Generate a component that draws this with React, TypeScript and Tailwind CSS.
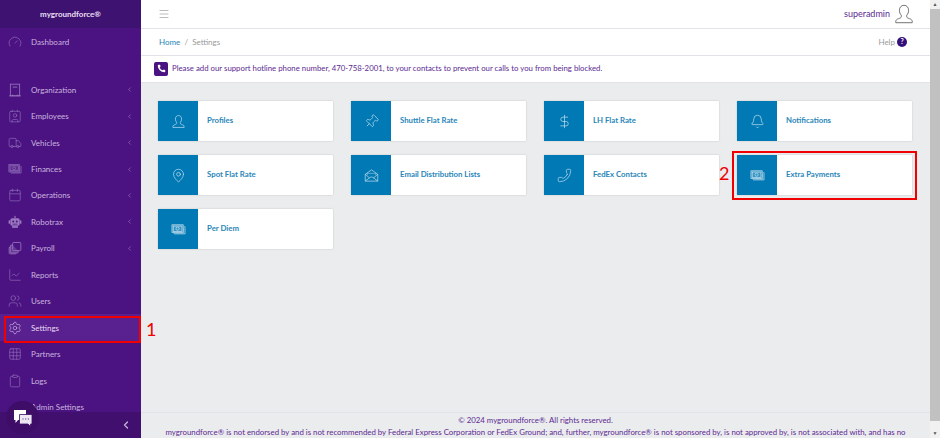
import React from "react";
import {
  Gauge, Contact, Truck, Calendar, ChartLine, Users, Settings, Grid3x3, Clipboard,
  ChevronLeft, Menu, DollarSign, Bell, MapPin, Phone, Pin,
} from "lucide-react";

type IP = { size?: number; strokeWidth?: number; className?: string };

const Bust = ({ size = 16, strokeWidth = 1, className }: IP) => (
  <svg width={size} height={size} viewBox="0 0 24 24" fill="none" stroke="currentColor" strokeWidth={strokeWidth} strokeLinejoin="round" className={className}>
    <path d="M12 2.500c-3 0-5 2.300-5 5.600 0 2.200.9 4 2 5.200v1.700c0 1-1 1.400-3 2.100-2 .7-3 1.600-3 3.200v1.200h18v-1.200c0-1.600-1-2.500-3-3.200-2-.7-3-1.100-3-2.100v-1.700c1.100-1.200 2-3 2-5.200 0-3.300-2-5.600-5-5.600z" />
  </svg>
);

const Money = ({ size = 16, strokeWidth = 1, className }: IP) => (
  <svg width={size} height={size} viewBox="0 0 24 24" fill="none" stroke="currentColor" strokeWidth={strokeWidth} className={className}>
    <rect x="1.500" y="4.500" width="18" height="12.500" fill="currentColor" fillOpacity="0.25" />
    <rect x="3.500" y="6.500" width="14" height="8.500" />
    <circle cx="10.500" cy="10.700" r="2.500" />
    <path d="M21 7.500h1.500V19H5v-1.500" />
    <path d="M20.500 9.500v8.500H7" opacity="0.6" />
  </svg>
);

const Mail = ({ size = 16, strokeWidth = 1, className }: IP) => (
  <svg width={size} height={size} viewBox="0 0 24 24" fill="none" stroke="currentColor" strokeWidth={strokeWidth} strokeLinejoin="round" className={className}>
    <path d="M2 10 12 3l10 7v11H2z" />
    <path d="M2 10l7 6M22 10l-7 6M2 21l7-5.500c2-1.500 4-1.500 6 0L22 21" />
    <path d="M5.500 8.500h13M5.500 8.500v2.500M18.500 8.500v2.500" opacity="0.7" />
  </svg>
);

const Handset = ({ size = 16, strokeWidth = 1, className }: IP) => (
  <Phone size={size} strokeWidth={strokeWidth} className={`-rotate-90 ${className ?? ""}`} />
);

const TiltPin = ({ size = 16, strokeWidth = 1, className }: IP) => (
  <Pin size={size} strokeWidth={strokeWidth} className={`rotate-45 ${className ?? ""}`} />
);

const Book = ({ size = 14, strokeWidth = 1, className }: IP) => (
  <svg width={size} height={size} viewBox="0 0 24 24" fill="none" stroke="currentColor" strokeWidth={strokeWidth * 1.4} className={className}>
    <rect x="4" y="2" width="16" height="20" />
    <path d="M2 22h20M8 7h8M8 22v-2M16 22v-2" />
  </svg>
);

const Robot = ({ size = 14, className }: IP) => (
  <svg width={size} height={size} viewBox="0 0 24 24" className={className}>
    <rect x="11" y="1.500" width="2" height="4" fill="currentColor" />
    <rect x="4" y="5.500" width="16" height="13" rx="3" fill="currentColor" />
    <rect x="1" y="9" width="2.500" height="6" rx="1" fill="currentColor" />
    <rect x="20.500" y="9" width="2.500" height="6" rx="1" fill="currentColor" />
    <circle cx="9" cy="11" r="1.700" fill="#4b1382" />
    <circle cx="15" cy="11" r="1.700" fill="#4b1382" />
    <rect x="8" y="15" width="8" height="1.300" fill="#4b1382" />
    <rect x="7" y="19" width="10" height="3" fill="currentColor" />
  </svg>
);

const Stack = ({ size = 14, strokeWidth = 1, className }: IP) => (
  <svg width={size} height={size} viewBox="0 0 24 24" fill="none" stroke="currentColor" strokeWidth={strokeWidth * 1.4} className={className}>
    <rect x="8" y="2.500" width="14" height="14" rx="1.500" />
    <path d="M8 7H5.500A1.500 1.500 0 0 0 4 8.500v10.500a1.500 1.500 0 0 0 1.500 1.500H16a1.500 1.500 0 0 0 1.500-1.500V16.500" fill="currentColor" fillOpacity="0.35" />
    <path d="M4 11H2v9.500A1.500 1.500 0 0 0 3.500 22H14" />
  </svg>
);

const nav: [string, any, boolean][] = [
  ["Organization", Book, true],
  ["Employees", Contact, true],
  ["Vehicles", Truck, true],
  ["Finances", Money, true],
  ["Operations", Calendar, true],
  ["Robotrax", Robot, true],
  ["Payroll", Stack, true],
  ["Reports", ChartLine, false],
  ["Users", Users, false],
  ["Settings", Settings, false],
  ["Partners", Grid3x3, false],
  ["Logs", Clipboard, false],
  ["Admin Settings", Settings, false],
];

const cards: [string, any][] = [
  ["Profiles", Bust],
  ["Shuttle Flat Rate", TiltPin],
  ["LH Flat Rate", DollarSign],
  ["Notifications", Bell],
  ["Spot Flat Rate", MapPin],
  ["Email Distribution Lists", Mail],
  ["FedEx Contacts", Handset],
  ["Extra Payments", Money],
  ["Per Diem", Money],
];

function NavItem({ label, Icon, arrow }: { label: string; Icon: any; arrow: boolean }) {
  const active = label === "Settings";
  const admin = label === "Admin Settings";
  return (
    <div className={`h-[26.45px] shrink-0 flex items-center pl-[8px] pr-[8px] ${active ? "bg-[#59208f] text-[#e6d8f2]" : "text-[#c9b4df]"}`}>
      <div className="w-[23px]">{!admin && <Icon size={14} strokeWidth={1} className={active ? "text-[#d9c8ea]" : "text-[#9a78bf]"} />}</div>
      <span className="flex-1 text-[8px]">{label}</span>
      {arrow && <ChevronLeft size={7} strokeWidth={1.5} className="text-[#b9a0d4]" />}
    </div>
  );
}

function Card({ label, Icon }: { label: string; Icon: any }) {
  return (
    <div className="w-[175px] h-[40px] flex bg-white rounded-[1px] shadow-[0_0_2px_rgba(0,0,0,0.18)]">
      <div className="w-[40px] bg-[#0079b5] flex items-center justify-center">
        <Icon size={15} strokeWidth={1} className="text-[#d8eaf4]" />
      </div>
      <div className="flex-1 flex items-center pl-[9px] text-[7.8px] font-bold text-[#2a86b8]">{label}</div>
    </div>
  );
}

export default function App() {
  return (
    <div className="relative w-[940px] h-[438px] overflow-hidden flex bg-[#ebecee] font-['Lato',sans-serif]">
      <aside className="w-[141px] h-full flex flex-col bg-[#4b1382] relative shrink-0">
        <div className="h-[28px] bg-[#3e1270] flex items-center justify-center text-[8px] font-bold text-[#eadff4]">mygroundforce®</div>
        <div className="h-[28px] flex items-center pl-[8px] text-[#c9b4df] text-[8px]">
          <div className="w-[23px]"><Gauge size={14} strokeWidth={1} className="text-[#9a78bf]" /></div>Dashboard
        </div>
        <div className="h-[20.5px]" />
        <div className="flex flex-col">
          {nav.map(([l, I, a]) => <NavItem key={l} label={l} Icon={I} arrow={a} />)}
        </div>
        <div className="absolute left-0 right-0 bottom-0 h-[26px] bg-[#41106f] flex items-center justify-end pr-[9px]">
          <ChevronLeft size={12} strokeWidth={2.5} className="text-[#c8b6da]" />
        </div>
        <div className="absolute left-[6px] top-[401px] w-[33px] h-[33px] rounded-full bg-[#3d0d68] flex items-center justify-center">
          <svg width="20" height="20" viewBox="0 0 20 20">
            <path d="M1 2h12v10H5l-2.500 3v-3H1z" fill="white" />
            <path d="M6.500 6.500H19v9.500h-1.500v2.500L15 16H6.500z" fill="#ece6f2" stroke="#3d0d68" strokeWidth="0.8" />
            <circle cx="10" cy="11" r="0.700" fill="#7a5a9a" /><circle cx="12.700" cy="11" r="0.700" fill="#7a5a9a" /><circle cx="15.400" cy="11" r="0.700" fill="#7a5a9a" />
          </svg>
        </div>
      </aside>
      <main className="flex-1 flex flex-col min-w-0">
        <header className="h-[28.5px] bg-white border-b border-[#e2e3e8] flex items-center pl-[17px] pr-[25px] justify-between shrink-0">
          <Menu size={12} strokeWidth={1} className="text-[#777]" />
          <div className="flex items-center gap-[3px]">
            <span className="text-[9px] text-[#5c2a92]">superadmin</span>
            <Bust size={22} strokeWidth={1} className="text-[#666]" />
          </div>
        </header>
        <div className="h-[27px] bg-white border-b border-[#e2e3e8] flex items-center pl-[18px] pr-[33px] justify-between shrink-0 text-[8px]">
          <div><span className="text-[#2a86b8]">Home</span><span className="text-[#9a9a9a]"> &nbsp;/&nbsp; Settings</span></div>
          <div className="flex items-center gap-[2px] text-[#9a9a9a]">Help <span className="w-[10px] h-[10px] rounded-full bg-[#35107a] text-white text-[7px] font-bold flex items-center justify-center">?</span></div>
        </div>
        <div className="h-[27px] bg-white border-b border-[#e2e3e8] flex items-center pl-[13px] gap-[4px] shrink-0">
          <div className="w-[14px] h-[14px] rounded-[2px] bg-[#4b1382] flex items-center justify-center">
            <Phone size={9} fill="white" strokeWidth={0} />
          </div>
          <span className="text-[7.8px] text-[#5c2a92]">Please add our support hotline phone number, 470-758-2001, to your contacts to prevent our calls to you from being blocked.</span>
        </div>
        <div className="flex-1 pl-[17px] pt-[18.5px]">
          <div className="grid grid-cols-[175px_175px_175px_175px] gap-x-[18px] gap-y-[14px]">
            {cards.map(([l, I]) => <Card key={l} label={l} Icon={I} />)}
          </div>
        </div>
        <footer className="h-[26px] shrink-0 border-t border-[#e2e3e8] flex flex-col items-center pr-[10px] text-[7.84px] leading-[12px] pt-[1px] text-[#5c2a92] whitespace-nowrap overflow-hidden">
          <div>© 2024 mygroundforce®. All rights reserved.</div>
          <div>mygroundforce® is not endorsed by and is not recommended by Federal Express Corporation or FedEx Ground; and, further, mygroundforce® is not sponsored by, is not approved by, is not associated with, and has no</div>
        </footer>
      </main>
      <div className="absolute right-0 top-0 bottom-0 w-[10px] bg-[#f1f1f1] flex flex-col items-center">
        <div className="h-[9px] text-[5px] leading-[9px] text-[#555]">▲</div>
        <div className="w-full h-[412px] bg-[#c1c1c1]" />
        <div className="flex-1" />
        <div className="h-[9px] text-[5px] leading-[9px] text-[#555]">▼</div>
      </div>
      <div className="absolute left-[4px] top-[316px] w-[137px] h-[27px] border-2 border-[#f00000]" />
      <div className="absolute left-[146px] top-[318px] text-[18px] leading-[22px] text-[#f00000]">1</div>
      <div className="absolute left-[732px] top-[151px] w-[185px] h-[49px] border-2 border-[#f00000]" />
      <div className="absolute left-[719px] top-[162px] text-[18px] leading-[22px] text-[#f00000]">2</div>
    </div>
  );
}
